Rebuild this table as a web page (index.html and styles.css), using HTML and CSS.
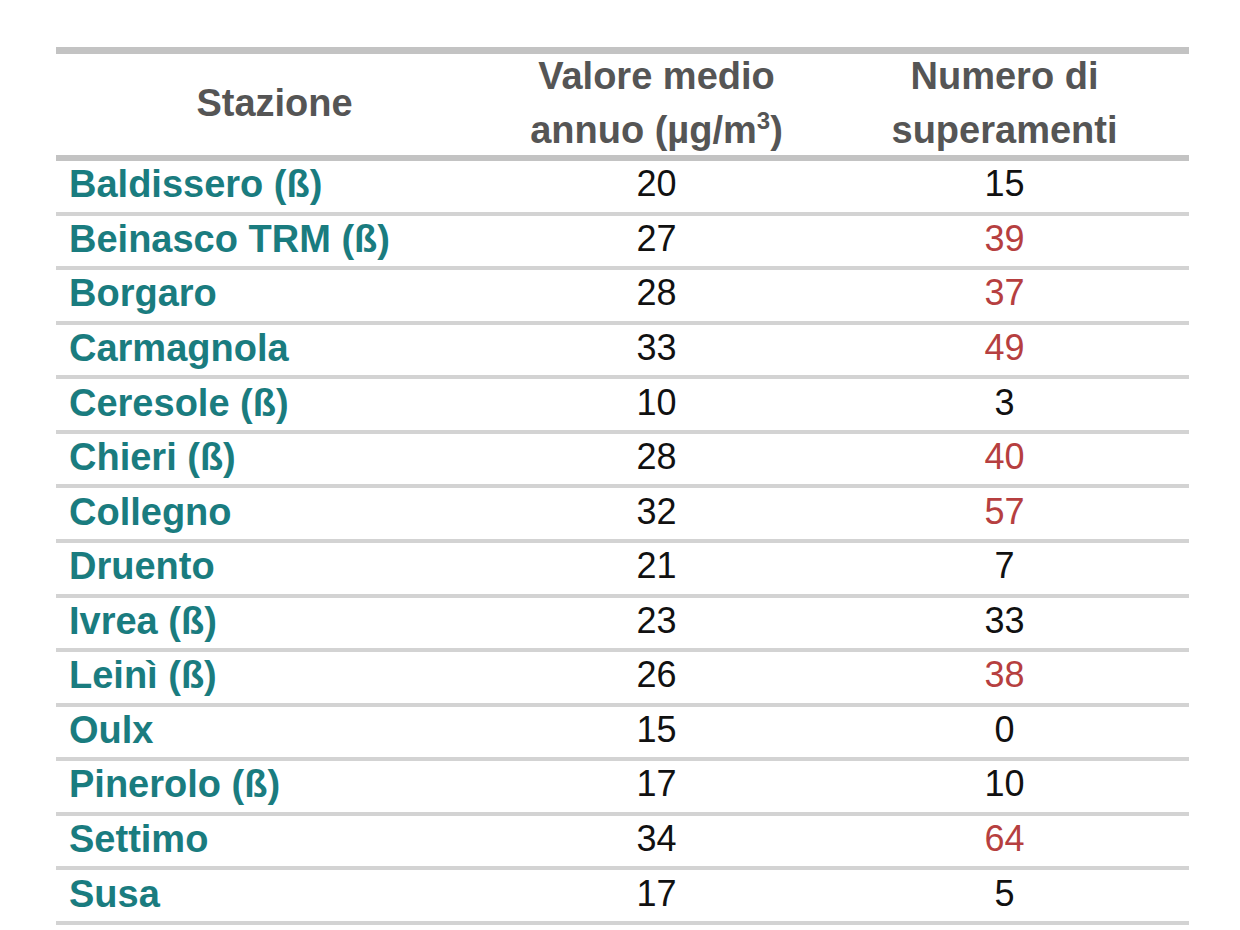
FILE: index.html
```html
<!DOCTYPE html>
<html lang="it">
<head>
<meta charset="utf-8">
<title>Stazioni</title>
<link rel="stylesheet" href="styles.css">
</head>
<body>
<div class="table">
  <div class="row head">
    <div class="cell name">Stazione</div>
    <div class="cell">Valore medio<br>annuo (µg/m<sup>3</sup>)</div>
    <div class="cell">Numero di<br>superamenti</div>
  </div>
  <div class="row"><div class="cell name">Baldissero (ß)</div><div class="cell">20</div><div class="cell">15</div></div>
  <div class="row"><div class="cell name">Beinasco TRM (ß)</div><div class="cell">27</div><div class="cell over">39</div></div>
  <div class="row"><div class="cell name">Borgaro</div><div class="cell">28</div><div class="cell over">37</div></div>
  <div class="row"><div class="cell name">Carmagnola</div><div class="cell">33</div><div class="cell over">49</div></div>
  <div class="row"><div class="cell name">Ceresole (ß)</div><div class="cell">10</div><div class="cell">3</div></div>
  <div class="row"><div class="cell name">Chieri (ß)</div><div class="cell">28</div><div class="cell over">40</div></div>
  <div class="row"><div class="cell name">Collegno</div><div class="cell">32</div><div class="cell over">57</div></div>
  <div class="row"><div class="cell name">Druento</div><div class="cell">21</div><div class="cell">7</div></div>
  <div class="row"><div class="cell name">Ivrea (ß)</div><div class="cell">23</div><div class="cell">33</div></div>
  <div class="row"><div class="cell name">Leinì (ß)</div><div class="cell">26</div><div class="cell over">38</div></div>
  <div class="row"><div class="cell name">Oulx</div><div class="cell">15</div><div class="cell">0</div></div>
  <div class="row"><div class="cell name">Pinerolo (ß)</div><div class="cell">17</div><div class="cell">10</div></div>
  <div class="row"><div class="cell name">Settimo</div><div class="cell">34</div><div class="cell over">64</div></div>
  <div class="row"><div class="cell name">Susa</div><div class="cell">17</div><div class="cell">5</div></div>
</div>
</body>
</html>
```
FILE: styles.css
```css
html, body {
  margin: 0;
  background: #ffffff;
}
body {
  padding: 47px 0 0 56px;
  font-family: "Liberation Sans", Arial, sans-serif;
}
.table {
  width: 1133px;
  border-top: 7px solid #c3c3c3;
}
.row {
  display: grid;
  grid-template-columns: 437px 327px 369px;
  height: 50.57px;
  border-bottom: 4px solid #d3d3d3;
  align-items: center;
}
.cell {
  text-align: center;
  font-size: 36px;
  line-height: 44px;
  color: #111111;
  padding-bottom: 4px;
}
.row .name {
  text-align: left;
  padding-left: 13px;
  font-size: 38px;
  font-weight: bold;
  color: #1a7c7f;
}
.over {
  color: #b63f40;
}
.row.head {
  height: 101px;
  grid-template-rows: minmax(0, 1fr);
  border-bottom: 6px solid #c3c3c3;
}
.head .cell,
.head .name {
  text-align: center;
  padding-left: 0;
  padding-bottom: 4px;
  font-size: 38px;
  font-weight: bold;
  color: #555555;
  line-height: 54px;
}
.head sup {
  font-size: 24px;
  line-height: 0;
  vertical-align: 14px;
}
```
